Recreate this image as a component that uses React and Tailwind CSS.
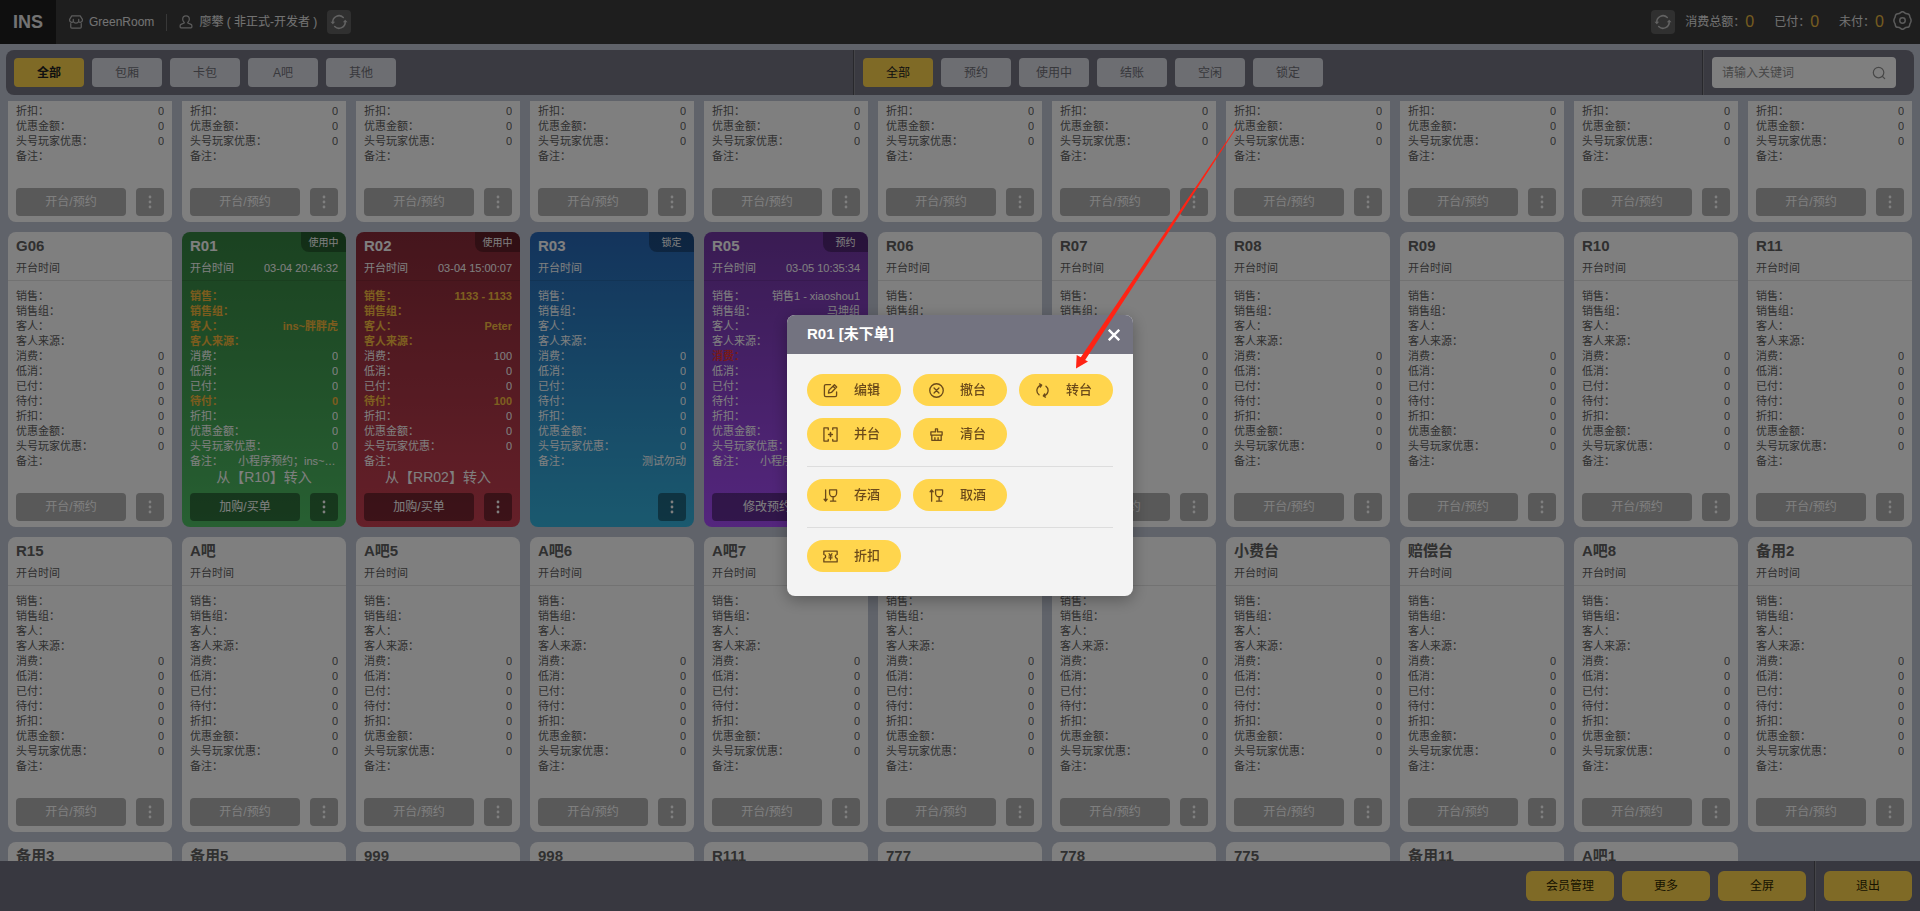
import React, { useEffect, useRef, useState } from 'react';
import clsx from 'clsx';

const ROOM_TYPES = ['全部', '包厢', '卡包', 'A吧', '其他'];
const ROOM_STATES = ['全部', '预约', '使用中', '结账', '空闲', '锁定'];

const FIELDS = [
    ['sales', '销售'],
    ['group', '销售组'],
    ['guest', '客人'],
    ['source', '客人来源'],
    ['spend', '消费'],
    ['minimum', '低消'],
    ['paid', '已付'],
    ['unpaid', '待付'],
    ['discount', '折扣'],
    ['reduced', '优惠金额'],
    ['player', '头号玩家优惠'],
    ['remark', '备注'],
];

const EMPTY_VALUES = { spend: '0', minimum: '0', paid: '0', unpaid: '0', discount: '0', reduced: '0', player: '0' };

const THEMES = {
    free: 'bg-white text-[#606060]',
    using: 'bg-linear-to-b from-[#368442] to-[#4fc065] text-white',
    checkout: 'bg-linear-to-b from-[#8a2b39] to-[#ca4052] text-white',
    locked: 'bg-linear-to-b from-[#2868b8] to-[#35b3de] text-white',
    booked: 'bg-linear-to-b from-[#7438a6] to-[#a84cfc] text-white',
};

const KEY_FIELDS = ['sales', 'group', 'guest', 'source', 'unpaid'];

const free = (name) => ({ name, theme: 'free', action: '开台/预约' });

const ROOMS = [
    ...Array.from({ length: 11 }, () => free('')),
    free('G06'),
    { name: 'R01', theme: 'using', badge: '使用中', time: '03-04 20:46:32', action: '加购/买单', highlight: KEY_FIELDS, color: 'text-[#f8b83c]', note: '从【R10】转入', values: { guest: 'ins~胖胖虎', remark: '小程序预约；ins~胖胖虎' } },
    { name: 'R02', theme: 'checkout', badge: '使用中', time: '03-04 15:00:07', action: '加购/买单', highlight: KEY_FIELDS, color: 'text-[#fcc040]', note: '从【RR02】转入', values: { sales: '1133 - 1133', guest: 'Peter', spend: '100', unpaid: '100' } },
    { name: 'R03', theme: 'locked', badge: '锁定', values: { remark: '测试勿动' } },
    { name: 'R05', theme: 'booked', badge: '预约', time: '03-05 10:35:34', action: '修改预约', highlight: ['spend'], color: 'text-[#f03434]', values: { sales: '销售1 - xiaoshou1', group: '马坤组', remark: '小程序预约；xiaoshou1' } },
    ...['R06', 'R07', 'R08', 'R09', 'R10', 'R11'].map(free),
    ...['R15', 'A吧', 'A吧5', 'A吧6', 'A吧7', '', '', '小费台', '赔偿台', 'A吧8', '备用2'].map(free),
    ...['备用3', '备用5', '999', '998', 'R111', '777', '778', '775', '备用11', 'A吧1'].map(free),
];

const Svg = ({ className, children }) => (
    <svg viewBox="0 0 16 16" fill="none" stroke="currentColor" strokeWidth="1.4" strokeLinecap="round" strokeLinejoin="round" className={className} aria-hidden="true">
        {children}
    </svg>
);

const ShopIcon = () => (
    <Svg className="size-[14px] text-[#b8b8b8]">
        <path d="M3.200 1h9.600L15.300 5v1.200a2.400 2.400 0 0 1-4.200 1.300V5 M.7 5v1.200a2.400 2.400 0 0 0 4.200 1.300V5 M.7 5L3.200 1 M4.900 7.500a3.500 3.500 0 0 0 6.200 0 M2 9.800v3.900A1.300 1.300 0 0 0 3.300 15h9.400a1.300 1.300 0 0 0 1.300-1.300V9.800" />
    </Svg>
);

const UserIcon = () => (
    <Svg className="size-[14px] text-[#b8b8b8]">
        <path d="M6 8.500C4.800 7.500 4.200 6.200 4.200 4.800a3.800 3.900 0 0 1 7.600 0c0 1.400-.6 2.700-1.800 3.700v.6l3.700 1.600c.6.300 1 .8 1 1.500v1.600a1 1 0 0 1-1 1H2.300a1 1 0 0 1-1-1v-1.600c0-.7.4-1.200 1-1.500L6 9.100z" />
    </Svg>
);

const SyncIcon = () => (
    <Svg className="size-[18px]">
        <path d="M2.500 8.400a5.500 5.500 0 0 1 9.300-4.400 M13.500 7.600a5.500 5.500 0 0 1-9.300 4.400" />
        <path d="M.4 7.800l2.100 2.200 2.100-2.200z M11.400 8.200l2.100-2.200 2.100 2.200z" fill="currentColor" stroke="none" />
    </Svg>
);

const GearIcon = () => (
    <svg viewBox="0 0 18 18" fill="none" stroke="currentColor" strokeWidth="1.4" strokeLinejoin="round" className="size-[19px] text-[#b8b8b8]" aria-hidden="true">
        <path d="M7.200 1.500C8.200.6 9.800.6 10.800 1.500c.8.7 1.500 1 2.600 1 1.300 0 2.200.9 2.400 2.200.1 1 .3 1.500.8 2.300.7 1.300.7 2.700 0 4-.5.800-.7 1.300-.8 2.300-.2 1.300-1.100 2.200-2.400 2.200-1.100 0-1.800.3-2.600 1-1 .9-2.600.9-3.600 0-.8-.7-1.500-1-2.600-1-1.300 0-2.200-.9-2.400-2.200-.1-1-.3-1.500-.8-2.300-.7-1.300-.7-2.700 0-4 .5-.8.7-1.300.8-2.300.2-1.300 1.100-2.200 2.400-2.200 1.100 0 1.800-.3 2.600-1z" />
        <circle cx="9" cy="9" r="2.600" />
    </svg>
);

const SearchIcon = () => (
    <Svg className="size-[14px]">
        <circle cx="7.500" cy="7.500" r="6" />
        <path d="M12 12l2.500 2.500" />
    </Svg>
);

const DotsIcon = () => (
    <svg viewBox="0 0 4 14" fill="currentColor" className="h-[14px] w-1" aria-hidden="true">
        <circle cx="2" cy="2" r="1.400" />
        <circle cx="2" cy="7" r="1.400" />
        <circle cx="2" cy="12" r="1.400" />
    </svg>
);

const EditIcon = () => (
    <Svg className="size-[15px]">
        <path d="M8 1.700H3A1.500 1.500 0 0 0 1.500 3.200V13A1.500 1.500 0 0 0 3 14.500h10a1.500 1.500 0 0 0 1.500-1.500V9.500 M5.800 10.800l.6-3.200L12.200 1.800l2.400 2.400L9 10.100z M10.800 3.400l2.200 2.200" />
    </Svg>
);

const CancelIcon = () => (
    <Svg className="size-[15px]">
        <circle cx="8" cy="8" r="7.200" />
        <path d="M5.400 5.400l5.200 5.200 M10.600 5.400l-5.200 5.200" />
    </Svg>
);

const TransferIcon = () => (
    <Svg className="size-[15px]">
        <path d="M6.800 2.200A5.900 5.900 0 0 0 4.300 12.600 M9.200 13.800A5.900 5.900 0 0 0 11.700 3.400 M4.900.9l2.200 1.300-1.400 2.200 M11.100 15.100l-2.200-1.300 1.400-2.200" />
    </Svg>
);

const MergeIcon = () => (
    <Svg className="size-[15px]">
        <path d="M5.600 2.800V1H1v14h4.600v-1.800 M10.400 2.800V1H15v14h-4.600v-1.800" />
        <path d="M8 6v4 M6 8h4" strokeWidth="1.700" />
    </Svg>
);

const CleanIcon = () => (
    <Svg className="size-[15px]">
        <path d="M6.900 5.200V2h2.200v3.200h4.900V8.600H2V5.200z M3 8.600v5.600h10V8.600 M6.300 14.200v-2.800 M9.700 14.200v-2.800" />
    </Svg>
);

const StoreWineIcon = () => (
    <Svg className="size-[15px]">
        <path d="M2.800 2v12 M1.200 12l1.600 2 1.600-2 M7 2h7.500v3.600a3.700 3.700 0 0 1-7.500 0z M10.800 9.400V14 M8 14h5.600" />
    </Svg>
);

const TakeWineIcon = () => (
    <Svg className="size-[15px]">
        <path d="M2.800 14V2 M1.200 4l1.600-2 1.600 2 M7 2h7.500v3.600a3.700 3.700 0 0 1-7.500 0z M10.800 9.400V14 M8 14h5.600" />
    </Svg>
);

const CouponIcon = () => (
    <Svg className="size-[15px]">
        <path d="M.9 2.200h14.200v3.600c-1.300.4-2 1.200-2 2.200s.7 1.800 2 2.200v3.600H.9v-3.600c1.300-.4 2-1.200 2-2.200s-.7-1.800-2-2.200z" />
        <path d="M6.400 4.900L8 7l1.600-2.100 M8 7v4.500 M6.200 7.400h3.600 M6.200 9.400h3.600" strokeWidth="1.200" />
    </Svg>
);

const CloseIcon = () => (
    <svg viewBox="0 0 12 12" stroke="currentColor" strokeWidth="2.400" className="size-3" aria-hidden="true">
        <path d="M.8.8l10.400 10.400 M11.200.8L.8 11.200" />
    </svg>
);

// Actions offered for an occupied table, one array per block of the dialog
const ACTION_GROUPS = [
    [['编辑', EditIcon], ['撤台', CancelIcon], ['转台', TransferIcon], ['并台', MergeIcon], ['清台', CleanIcon]],
    [['存酒', StoreWineIcon], ['取酒', TakeWineIcon]],
    [['折扣', CouponIcon]],
];

const IconButton = ({ label }) => (
    <button type="button" aria-label={label} className="flex size-6 items-center justify-center rounded bg-[#606060] text-[#c4c4c4]">
        <SyncIcon />
    </button>
);

const Total = ({ label, value }) => (
    <div className="flex items-center">
        <span>{label}：</span>
        <span className="text-base leading-5 text-[#e8b840]">{value}</span>
    </div>
);

const TopBar = () => (
    <header className="flex h-11 shrink-0 items-center bg-[#3c3c3c] text-xs text-[#e6e6e6]">
        <h1 className="flex h-full w-14 items-center justify-center bg-[#1e1e1e] text-lg font-bold">INS</h1>
        <div className="ml-[13px] flex items-center gap-[6px]">
            <ShopIcon />
            <span>GreenRoom</span>
        </div>
        <div className="mx-3 h-[17px] w-px bg-[#707070]" />
        <div className="flex items-center gap-[6px]">
            <UserIcon />
            <span>廖攀 ( 非正式-开发者 )</span>
        </div>
        <div className="ml-[10px]">
            <IconButton label="刷新账号" />
        </div>
        <div className="ml-auto flex items-center pr-2">
            <IconButton label="刷新金额" />
            <div className="ml-[10px] flex gap-5">
                <Total label="消费总额" value="0" />
                <Total label="已付" value="0" />
                <Total label="未付" value="0" />
            </div>
            <button type="button" aria-label="设置" className="mb-1 ml-[9px]">
                <GearIcon />
            </button>
        </div>
    </header>
);

const FilterGroup = ({ items, value, onChange, boldActive }) => (
    <div className="flex flex-1 items-center gap-2 px-2">
        {items.map((item) => (
            <button
                key={item}
                type="button"
                onClick={() => onChange(item)}
                className={clsx(
                    'h-[29px] w-[70px] rounded text-xs',
                    item === value ? 'bg-[#ffd54d] text-[#202020]' : 'bg-[#dadce4] text-[#707078]',
                    item === value && boldActive && 'font-bold'
                )}
            >
                {item}
            </button>
        ))}
    </div>
);

const Divider = () => <div className="w-[2px] self-stretch border-r border-[#8a8a92] bg-[#505058]" />;

const RoomCard = ({ room }) => {
    const isFree = room.theme === 'free';
    const values = { ...EMPTY_VALUES, ...room.values };
    const buttonStyle = isFree ? 'bg-[#b2b2b2] text-white' : 'bg-black/40 text-white';

    return (
        <article className={clsx('relative overflow-hidden rounded-lg text-[11px] leading-[15px]', THEMES[room.theme])}>
            {room.badge && (
                <span className="absolute top-0 right-0 flex h-5 w-[45px] items-center justify-center rounded-bl-lg bg-black/30 text-[10px]">{room.badge}</span>
            )}
            <div className="h-12 px-2 pt-1">
                <h2 className="h-5 text-[15px] leading-5 font-bold">{room.name}</h2>
                <div className="mt-[5px] flex justify-between">
                    <span>开台时间</span>
                    <span>{room.time}</span>
                </div>
            </div>
            <div className="border-t border-black/10 px-2 pt-2 pb-[6px]">
                <dl>
                    {FIELDS.map(([key, label]) => (
                        <div key={key} className={clsx('flex h-[15px] justify-between', room.highlight?.includes(key) && ['font-bold', room.color])}>
                            <dt className="shrink-0">{label}：</dt>
                            <dd className={clsx('truncate', key === 'remark' && 'max-w-[100px]')}>{values[key]}</dd>
                        </div>
                    ))}
                </dl>
                <p className="h-4 text-center text-sm leading-4">{room.note}</p>
                <div className="mt-2 flex justify-end gap-[10px]">
                    {room.action && (
                        <button type="button" className={clsx('h-7 flex-1 rounded text-xs', buttonStyle)}>{room.action}</button>
                    )}
                    <button type="button" aria-label="更多操作" className={clsx('flex size-7 items-center justify-center rounded', buttonStyle)}>
                        <DotsIcon />
                    </button>
                </div>
            </div>
        </article>
    );
};

const FooterButton = ({ children }) => (
    <button type="button" className="h-[30px] w-[88px] rounded-md bg-[#ffd54d] text-xs text-[#302800]">{children}</button>
);

const ActionDialog = ({ onClose }) => (
    <div className="fixed inset-0 flex items-center justify-center bg-black/50">
        <section role="dialog" aria-labelledby="dialog-title" className="w-[346px] overflow-hidden rounded-lg bg-[#f3f3f3] shadow-[0_4px_16px_rgba(0,0,0,0.3)]">
            <div className="flex h-[39px] items-center justify-between bg-[#737380] pr-[13px] pl-5 text-white">
                <h2 id="dialog-title" className="text-[15px] font-bold">R01 [未下单]</h2>
                <button type="button" aria-label="关闭" onClick={onClose}>
                    <CloseIcon />
                </button>
            </div>
            <div className="px-5 pt-2 pb-2">
                {ACTION_GROUPS.map((group, index) => (
                    <div key={index} className="flex flex-wrap gap-3 border-b border-[#dddddd] pt-3 pb-4 last:border-0">
                        {group.map(([label, Icon]) => (
                            <button key={label} type="button" className="flex h-8 w-[94px] items-center gap-4 rounded-full bg-[#ffd54d] pl-4 text-[13px] font-medium text-[#6b4a1a]">
                                <Icon />
                                {label}
                            </button>
                        ))}
                    </div>
                ))}
            </div>
        </section>
    </div>
);

export default function App() {
    const [type, setType] = useState('全部');
    const [state, setState] = useState('全部');
    const [keyword, setKeyword] = useState('');
    const [dialogOpen, setDialogOpen] = useState(true);
    const listRef = useRef(null);

    // Open the list with the occupied tables in view
    useEffect(() => {
        listRef.current.scrollTop = 174;
    }, []);

    return (
        <div className="relative flex h-screen flex-col overflow-hidden bg-[#c0c6d4] font-['Liberation_Sans','Noto_Sans_CJK_SC',sans-serif]">
            <TopBar />

            <nav className="m-[6px] flex h-[45px] shrink-0 overflow-hidden rounded-lg bg-[#747482]">
                <FilterGroup items={ROOM_TYPES} value={type} onChange={setType} boldActive />
                <Divider />
                <FilterGroup items={ROOM_STATES} value={state} onChange={setState} />
                <Divider />
                <div className="flex items-center pr-[18px] pl-2">
                    <label className="flex h-[31px] w-[184px] items-center rounded bg-white px-[10px] text-[#909090]">
                        <input
                            type="text"
                            aria-label="搜索"
                            value={keyword}
                            onChange={(e) => setKeyword(e.target.value)}
                            placeholder="请输入关键词"
                            className="min-w-0 flex-1 text-xs text-[#606060] outline-none placeholder:text-[#909090]"
                        />
                        <SearchIcon />
                    </label>
                </div>
            </nav>

            <main ref={listRef} className="min-h-0 flex-1 overflow-y-auto px-2 [scrollbar-width:none]">
                <div className="grid grid-cols-11 gap-[10px]">
                    {ROOMS.map((room, index) => (
                        <RoomCard key={index} room={room} />
                    ))}
                </div>
            </main>

            <footer className="flex h-[50px] shrink-0 items-center justify-end gap-2 bg-[#707080] pr-2">
                <FooterButton>会员管理</FooterButton>
                <FooterButton>更多</FooterButton>
                <FooterButton>全屏</FooterButton>
                <Divider />
                <FooterButton>退出</FooterButton>
            </footer>

            {dialogOpen && <ActionDialog onClose={() => setDialogOpen(false)} />}

            <svg viewBox="0 0 162 242" className="pointer-events-none absolute top-[127px] left-[1075px] h-[242px] w-[162px]" fill="#ff2314" aria-hidden="true">
                <path d="M160.700 .8L161.300 1.200 10.200 233 13 234.500 1 241.500 1.700 228 5.800 230.300z" />
            </svg>
        </div>
    );
}
